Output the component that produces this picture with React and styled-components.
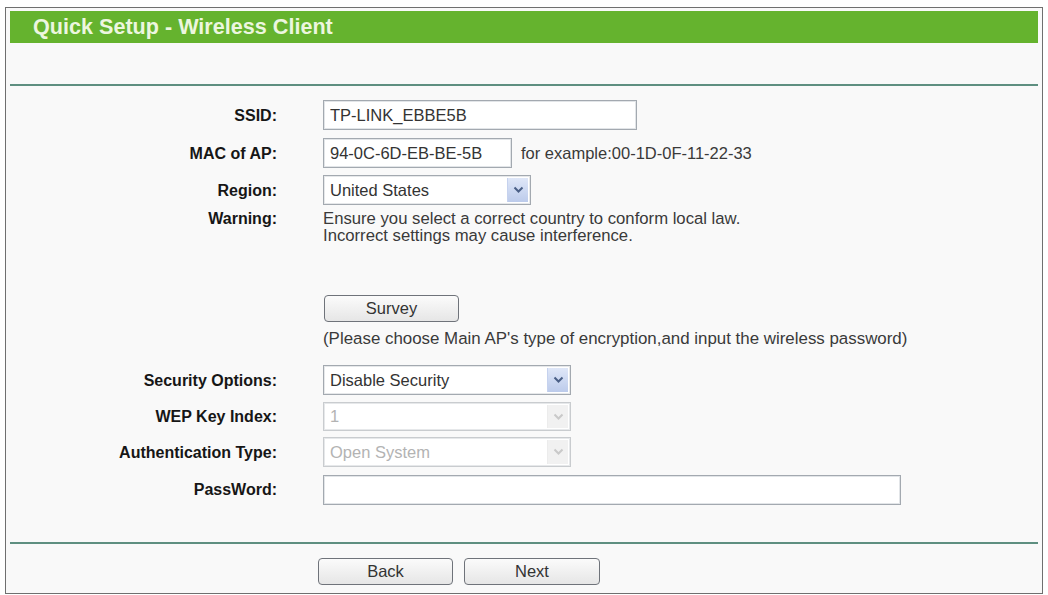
import React from 'react';
import styled, { createGlobalStyle } from 'styled-components';

const GlobalStyle = createGlobalStyle`
  html, body {
    margin: 0;
    padding: 0;
    background: #ffffff;
  }
  body {
    font-family: "Liberation Sans", Arial, sans-serif;
  }
`;

const Page = styled.div`
  padding: 7px 5px 0 5px;
  width: 1038px;
`;

const Panel = styled.div`
  border: 1px solid #6f6f6f;
  background: #f9f9f9;
  padding: 3px 4px 8px 4px;
`;

const Header = styled.div`
  height: 32px;
  background: #65b32e;
  display: flex;
  align-items: center;
  padding-left: 23px;
  color: #ecf6df;
  font-size: 21.6px;
  font-weight: bold;
`;

const Divider = styled.div`
  height: 2px;
  background: #5e8f80;
  margin-top: ${(p) => p.$top}px;
`;

const Form = styled.div`
  display: flex;
  flex-direction: column;
  padding-top: 14px;
`;

const Row = styled.div`
  display: grid;
  grid-template-columns: 267px 1fr;
  column-gap: 46px;
  align-items: ${(p) => (p.$top ? 'start' : 'center')};
  min-height: ${(p) => p.$h || 30}px;
  margin-top: ${(p) => p.$mt || 0}px;
`;

const Label = styled.div`
  text-align: right;
  font-size: 16px;
  font-weight: bold;
  color: #161616;
  line-height: 17px;
`;

const Cell = styled.div`
  display: flex;
  align-items: center;
  gap: 9px;
`;

const Text = styled.div`
  font-size: ${(p) => p.$size || 16.7}px;
  line-height: 17px;
  color: #3a3a3a;
  white-space: nowrap;
`;

const Hint = styled.span`
  font-size: 16.5px;
  color: #3a3a3a;
`;

const Input = styled.input`
  box-sizing: border-box;
  width: ${(p) => p.$w}px;
  height: ${(p) => p.$h || 30}px;
  margin: 0;
  padding: 0 0 0 6px;
  border: 1px solid #a3a9b0;
  box-shadow: inset 0 0 0 1px #e2e5e8;
  background: #ffffff;
  font-family: inherit;
  font-size: 16.5px;
  color: #333333;
  outline: none;
`;

const Select = styled.div`
  box-sizing: border-box;
  width: ${(p) => p.$w}px;
  height: ${(p) => p.$h || 30}px;
  border: 1px solid ${(p) => (p.$disabled ? '#c9cccf' : '#a3a9b0')};
  box-shadow: inset 0 0 0 1px #e6e8ea;
  background: #ffffff;
  display: flex;
  align-items: center;
  justify-content: space-between;
  padding: 2px 2px 2px 6px;
  font-size: 16.5px;
  color: ${(p) => (p.$disabled ? '#b3b3b3' : '#333333')};
`;

const Arrow = styled.div`
  width: 20px;
  align-self: stretch;
  display: flex;
  align-items: center;
  justify-content: center;
  background: ${(p) =>
    p.$disabled ? '#f1f1f1' : 'linear-gradient(#dfe7f8, #bccbeb)'};
  border-left: 1px solid ${(p) => (p.$disabled ? '#ececec' : '#c6d2ee')};
`;

const Button = styled.button`
  box-sizing: border-box;
  width: ${(p) => p.$w}px;
  height: ${(p) => p.$h}px;
  margin: 0 0 0 ${(p) => p.$ml || 0}px;
  padding: 0;
  border: 1px solid #6f737a;
  border-radius: 4px;
  background: linear-gradient(#fbfbfb, #e6e6e6);
  font-family: inherit;
  font-size: 16.5px;
  color: #333333;
`;

const Footer = styled.div`
  display: flex;
  gap: 11px;
  padding-left: 308px;
  margin-top: 14px;
`;

const Chevron = ({ disabled }) => (
  <svg width="11" height="8" viewBox="0 0 11 8">
    <path
      d="M1.5 1.5 L5.5 5.5 L9.5 1.5"
      fill="none"
      stroke={disabled ? '#c9c9c9' : '#4a5f86'}
      strokeWidth="2"
    />
  </svg>
);

const Dropdown = ({ value, width, height, disabled }) => (
  <Select $w={width} $h={height} $disabled={disabled}>
    <span>{value}</span>
    <Arrow $disabled={disabled}>
      <Chevron disabled={disabled} />
    </Arrow>
  </Select>
);

export default function App() {
  return (
    <Page>
      <GlobalStyle />
      <Panel>
        <Header>Quick Setup - Wireless Client</Header>
        <Divider $top={41} />
        <Form>
          <Row>
            <Label>SSID:</Label>
            <Cell>
              <Input $w={314} defaultValue="TP-LINK_EBBE5B" />
            </Cell>
          </Row>
          <Row $mt={8}>
            <Label>MAC of AP:</Label>
            <Cell>
              <Input $w={189} defaultValue="94-0C-6D-EB-BE-5B" />
              <Hint>for example:00-1D-0F-11-22-33</Hint>
            </Cell>
          </Row>
          <Row $mt={7}>
            <Label>Region:</Label>
            <Cell>
              <Dropdown value="United States" width={208} />
            </Cell>
          </Row>
          <Row $top $mt={4.5} $h={34}>
            <Label>Warning:</Label>
            <Text>
              Ensure you select a correct country to conform local law.
              <br />
              Incorrect settings may cause interference.
            </Text>
          </Row>
          <Row $mt={51.5} $h={27}>
            <span />
            <Cell>
              <Button $w={135} $h={27} $ml={1}>
                Survey
              </Button>
            </Cell>
          </Row>
          <Row $mt={7.5} $h={17}>
            <span />
            <Text $size={16.9}>
              (Please choose Main AP's type of encryption,and input the wireless password)
            </Text>
          </Row>
          <Row $mt={18.5}>
            <Label>Security Options:</Label>
            <Cell>
              <Dropdown value="Disable Security" width={248} />
            </Cell>
          </Row>
          <Row $mt={7} $h={29}>
            <Label>WEP Key Index:</Label>
            <Cell>
              <Dropdown value="1" width={248} height={29} disabled />
            </Cell>
          </Row>
          <Row $mt={6} $h={30}>
            <Label>Authentication Type:</Label>
            <Cell>
              <Dropdown value="Open System" width={248} disabled />
            </Cell>
          </Row>
          <Row $mt={7.5}>
            <Label>PassWord:</Label>
            <Cell>
              <Input $w={578} type="text" defaultValue="" />
            </Cell>
          </Row>
        </Form>
        <Divider $top={37} />
        <Footer>
          <Button $w={135} $h={27}>Back</Button>
          <Button $w={136} $h={27}>Next</Button>
        </Footer>
      </Panel>
    </Page>
  );
}
